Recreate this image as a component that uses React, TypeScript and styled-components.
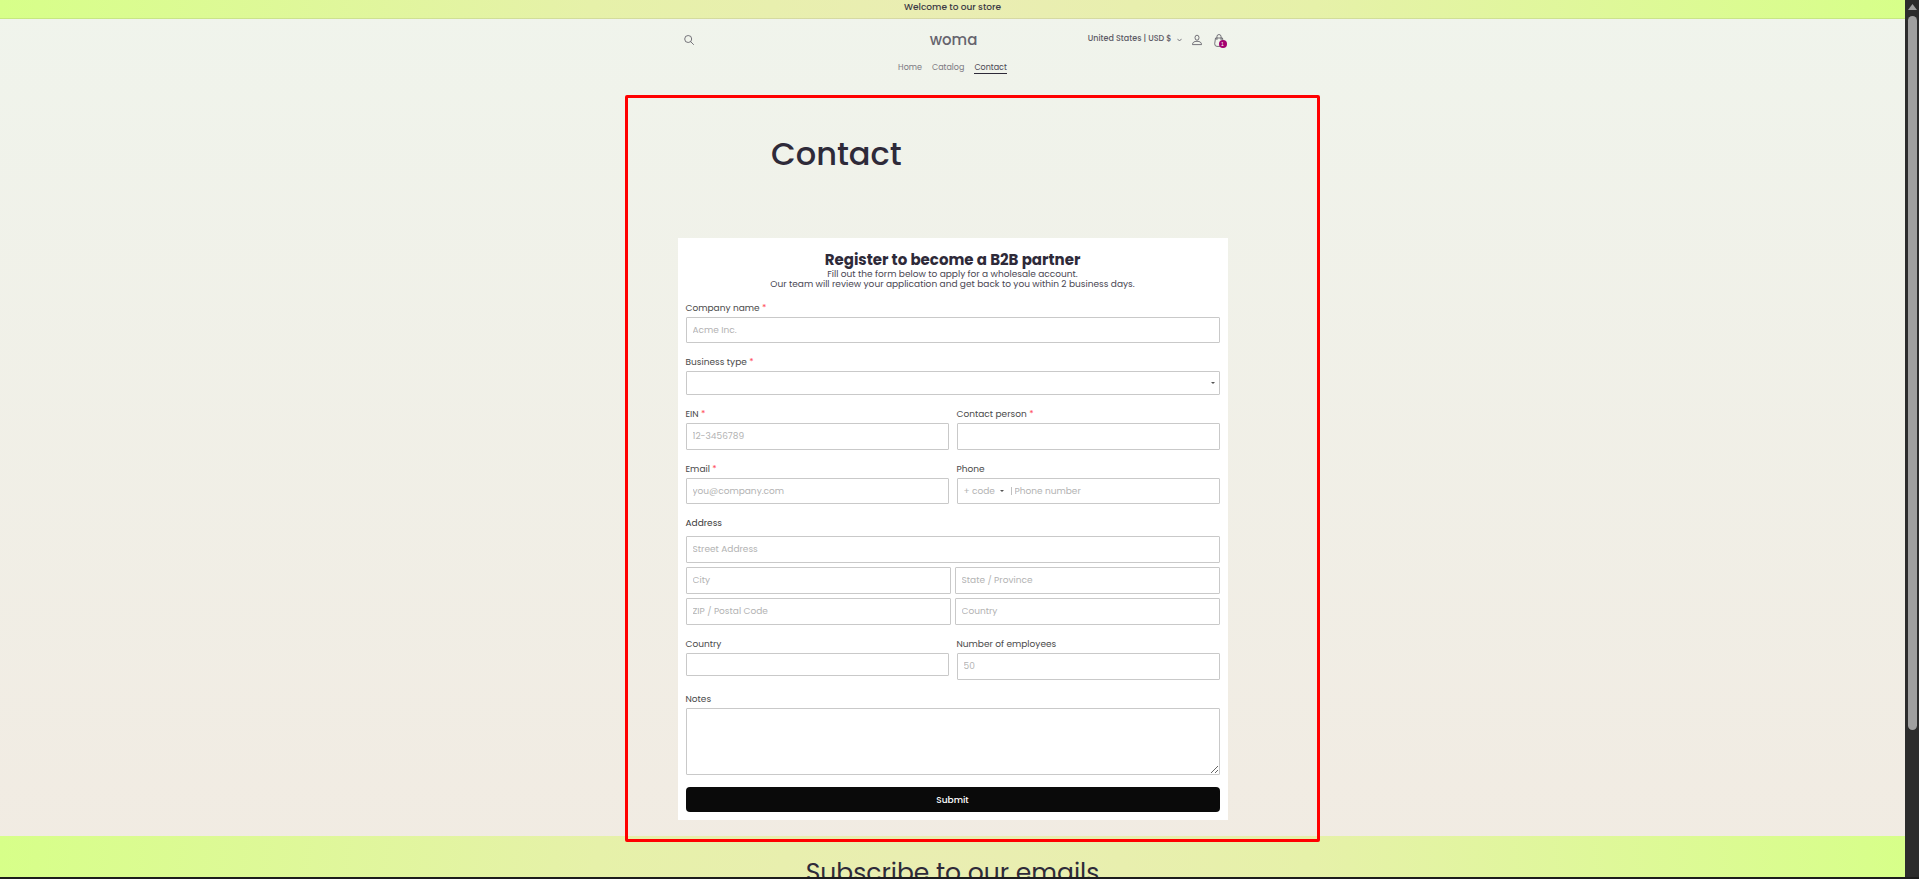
import React from "react";
import styled, { createGlobalStyle, css } from "styled-components";

const GlobalStyle = createGlobalStyle`
  *, *::before, *::after { box-sizing: border-box; }
  html, body { margin: 0; height: 100%; }
  body {
    font-family: Poppins, Inter, "Open Sans", sans-serif;
    font-size: 9px;
    line-height: 12px;
    color: #4a4753;
    overflow: hidden;
  }
  h1, h2, p { margin: 0; }
`;

const Viewport = styled.div`
  display: grid;
  grid-template: minmax(0, 1fr) 2px / minmax(0, 1fr) 14px;
  height: 100vh;
  background: #1c1c1c;
`;

const Page = styled.div`
  position: relative;
  overflow: hidden;
  background: linear-gradient(180deg, #f0f4ec, #f1ebe2);
`;

const ScrollTrack = styled.div`
  display: flex;
  flex-direction: column;
  align-items: center;
  gap: 6px;
  padding-top: 4px;
  background: #2c2c2c;
`;

const ScrollArrow = styled.svg`
  width: 9px;
  height: 6px;
  flex: none;
  fill: #9f9f9f;
`;

const ScrollThumb = styled.div`
  width: 9px;
  height: calc(82% - 2px);
  border-radius: 5px;
  background: #9f9f9f;
`;

const greenGlow = css`
  background: radial-gradient(circle, #eaedb3, #e6f1a9 38%, #d7ff89 100%);
`;

const Announcement = styled.div`
  ${greenGlow}
  height: 19px;
  padding-top: 1px;
  border-bottom: 1px solid rgba(46, 42, 57, 0.1);
  text-align: center;
  font-weight: 500;
  color: #3d3a46;
`;

const Container = styled.div`
  width: 550px;
  max-width: 100%;
  margin: 0 auto;
`;

const Header = styled.header`
  padding: 11px 0 20px;
`;

const HeaderRow = styled.div`
  display: grid;
  grid-template-columns: 1fr auto 1fr;
  align-items: center;
  height: 20px;
  padding: 0 4px 0 6px;
`;

const Logo = styled.a`
  font-size: 15px;
  line-height: 18px;
  font-weight: 500;
  color: #65636d;
  text-decoration: none;
`;

const Tools = styled.div`
  display: flex;
  align-items: center;
  justify-content: flex-end;
  gap: 10px;
`;

const IconGroup = styled.div`
  display: flex;
  align-items: center;
  gap: 12px;
`;

const IconButton = styled.button`
  position: relative;
  display: flex;
  width: 10px;
  padding: 0;
  border: 0;
  background: none;
  color: #55535d;
  svg { display: block; fill: none; stroke: currentColor; overflow: visible; }
`;

const Locale = styled.button`
  display: flex;
  align-items: center;
  gap: 5px;
  padding: 0 0 2px;
  border: 0;
  background: none;
  font: 500 8px/12px Poppins, Inter, sans-serif;
  color: #5c5a65;
  svg { fill: none; stroke: currentColor; margin-top: 2px; }
`;

const Badge = styled.span`
  position: absolute;
  right: -3px;
  bottom: -1px;
  width: 8px;
  height: 8px;
  border-radius: 50%;
  background: #a3006f;
  color: #fff;
  font-size: 5px;
  line-height: 8px;
  text-align: center;
`;

const Nav = styled.nav`
  display: flex;
  justify-content: center;
  gap: 10px;
  margin-top: 13px;
`;

const NavLink = styled.a<{ $active?: boolean }>`
  font-size: 8px;
  line-height: 10px;
  text-decoration: none;
  color: ${(p) => (p.$active ? "#4a4753" : "#7b7982")};
  border-bottom: 1px solid ${(p) => (p.$active ? "#2e2a39" : "transparent")};
`;

const Highlight = styled.div`
  position: absolute;
  top: 95px;
  left: calc(50% - 328px);
  width: 695px;
  height: 747px;
  border: 3px solid #f00;
  border-radius: 2px;
  pointer-events: none;
`;

const TitleBar = styled.div`
  width: 363px;
  max-width: 100%;
  margin: 0 auto;
  padding: 38px 0 62px;
`;

const Title = styled.h1`
  font-size: 32px;
  line-height: 44px;
  font-weight: 500;
  color: #2e2a39;
`;

const Card = styled.form`
  display: flex;
  flex-direction: column;
  gap: 13px;
  padding: 13px 8px 8px;
  margin-bottom: 16px;
  background: #fff;
`;

const Intro = styled.div`
  text-align: center;
  line-height: 10px;
`;

const FormTitle = styled.h2`
  font-size: 15px;
  line-height: 18px;
  font-weight: 700;
  color: #2e2a39;
`;

const Row = styled.div`
  display: grid;
  grid-template-columns: 1fr 1fr;
  align-items: start;
  gap: 8px;
`;

const FieldBox = styled.div`
  display: flex;
  flex-direction: column;
  gap: 3px;
`;

const Label = styled.label`
  color: #4a4a4a;
`;

const Required = styled.span`
  color: #ff4d5a;
`;

const control = css`
  width: 100%;
  border: 1px solid #c9c9c9;
  border-radius: 1px;
  background: #fff;
  font: 400 9px/12px Poppins, Inter, sans-serif;
  color: #333;
  padding: 0 6px;
  outline: none;
  &::placeholder { color: #b3b3b3; opacity: 1; }
`;

const Input = styled.input<{ $h?: number }>`
  ${control}
  height: ${(p) => p.$h ?? 27}px;
`;

const SelectWrap = styled.div`
  position: relative;
  display: flex;
`;

const Select = styled.select`
  ${control}
  height: 24px;
  appearance: none;
`;

const Caret = styled.svg`
  width: 4px;
  height: 2px;
  fill: #555;
`;

const SelectCaret = styled(Caret)`
  position: absolute;
  right: 5px;
  top: 11px;
`;

const PhoneBox = styled.div`
  ${control}
  display: flex;
  align-items: center;
  height: 26px;
  color: #b3b3b3;
`;

const CodeSelect = styled.select`
  appearance: none;
  width: 36px;
  padding: 0;
  border: 0;
  background: none;
  font: inherit;
  color: inherit;
`;

const Divider = styled.span`
  width: 1px;
  height: 8px;
  margin: 0 3px 0 7px;
  background: #c0c0c0;
`;

const PhoneInput = styled.input`
  flex: 1;
  min-width: 0;
  padding: 0;
  border: 0;
  font: inherit;
  outline: none;
  &::placeholder { color: #b3b3b3; opacity: 1; }
`;

const AddressGroup = styled.fieldset`
  margin: 0;
  padding: 0;
  border: 0;
`;

const Legend = styled.legend`
  padding: 0;
  margin-bottom: 7px;
  color: #3a3a3a;
`;

const AddressGrid = styled.div`
  display: grid;
  grid-template-columns: 1fr 1fr;
  gap: 4px;
`;

const StreetInput = styled(Input)`
  grid-column: 1 / -1;
`;

const Notes = styled.textarea`
  ${control}
  display: block;
  height: 67px;
  resize: vertical;
`;

const Submit = styled.button`
  height: 25px;
  margin-top: -1px;
  border: 0;
  border-radius: 4px;
  background: #0a0a0a;
  color: #fff;
  font: 500 9px/12px Poppins, Inter, sans-serif;
`;

const Newsletter = styled.section`
  ${greenGlow}
  height: 190px;
  padding-top: 20px;
  text-align: center;
`;

const NewsletterTitle = styled.h2`
  font-size: 25px;
  line-height: 34px;
  font-weight: 400;
  color: #2e2a39;
`;

type FieldProps = {
  id: string;
  label: string;
  required?: boolean;
  children: React.ReactNode;
};

function Field({ id, label, required, children }: FieldProps) {
  return (
    <FieldBox>
      <Label htmlFor={id}>
        {label} {required && <Required>*</Required>}
      </Label>
      {children}
    </FieldBox>
  );
}

export default function App() {
  return (
    <>
      <GlobalStyle />
      <Viewport>
        <Page>
          <Announcement>Welcome to our store</Announcement>
          <Header>
            <Container>
              <HeaderRow>
                <IconButton aria-label="Search">
                  <svg width="10" height="10" viewBox="0 0 10 10" strokeWidth="0.8">
                    <circle cx="4.2" cy="4" r="3.5" />
                    <path d="M6.6 6.6 9.8 9.8" />
                  </svg>
                </IconButton>
                <Logo href="#">woma</Logo>
                <Tools>
                  <Locale type="button">
                    United States | USD $
                    <svg width="5" height="4" viewBox="0 0 5 4" strokeWidth="0.8">
                      <path d="M0.4 0.8 2.5 3 4.6 0.8" />
                    </svg>
                  </Locale>
                  <IconGroup>
                    <IconButton aria-label="Account">
                      <svg width="10" height="10" viewBox="0 0 10 10" strokeWidth="0.8">
                        <ellipse cx="5" cy="2.7" rx="2" ry="2.5" />
                        <path d="M0.5 9.6C0.5 7.4 2 6.3 5 6.3S9.5 7.4 9.5 9.6Z" />
                      </svg>
                    </IconButton>
                    <IconButton aria-label="Cart">
                      <svg width="10" height="13" viewBox="0 0 10 13" strokeWidth="0.8">
                        <path d="M1.5 4H8.5L9.3 9.8Q9.3 12.4 7 12.4H3Q0.7 12.4 0.7 9.8Z" />
                        <path d="M2.9 6V2.8Q2.9 0.5 5 0.5T7.1 2.8V6" />
                      </svg>
                      <Badge>1</Badge>
                    </IconButton>
                  </IconGroup>
                </Tools>
              </HeaderRow>
              <Nav>
                <NavLink href="#">Home</NavLink>
                <NavLink href="#">Catalog</NavLink>
                <NavLink href="#" $active>Contact</NavLink>
              </Nav>
            </Container>
          </Header>

          <main>
            <TitleBar>
              <Title>Contact</Title>
            </TitleBar>
            <Container>
              <Card>
                <Intro>
                  <FormTitle>Register to become a B2B partner</FormTitle>
                  <p>Fill out the form below to apply for a wholesale account.</p>
                  <p>Our team will review your application and get back to you within 2 business days.</p>
                </Intro>
                <Field id="company" label="Company name" required>
                  <Input id="company" placeholder="Acme Inc." $h={26} />
                </Field>
                <Field id="type" label="Business type" required>
                  <SelectWrap>
                    <Select id="type" />
                    <SelectCaret viewBox="0 0 4 2"><path d="M0 0H4L2 2Z" /></SelectCaret>
                  </SelectWrap>
                </Field>
                <Row>
                  <Field id="ein" label="EIN" required>
                    <Input id="ein" placeholder="12-3456789" />
                  </Field>
                  <Field id="person" label="Contact person" required>
                    <Input id="person" />
                  </Field>
                </Row>
                <Row>
                  <Field id="email" label="Email" required>
                    <Input id="email" type="email" placeholder="you@company.com" $h={26} />
                  </Field>
                  <Field id="phone" label="Phone">
                    <PhoneBox>
                      <CodeSelect aria-label="Country code">
                        <option>+ code</option>
                      </CodeSelect>
                      <Caret viewBox="0 0 4 2"><path d="M0 0H4L2 2Z" /></Caret>
                      <Divider />
                      <PhoneInput id="phone" type="tel" placeholder="Phone number" />
                    </PhoneBox>
                  </Field>
                </Row>
                <AddressGroup>
                  <Legend>Address</Legend>
                  <AddressGrid>
                    <StreetInput aria-label="Street Address" placeholder="Street Address" />
                    <Input aria-label="City" placeholder="City" />
                    <Input aria-label="State / Province" placeholder="State / Province" />
                    <Input aria-label="ZIP / Postal Code" placeholder="ZIP / Postal Code" />
                    <Input aria-label="Country" placeholder="Country" />
                  </AddressGrid>
                </AddressGroup>
                <Row>
                  <Field id="country" label="Country">
                    <Input id="country" $h={23} />
                  </Field>
                  <Field id="employees" label="Number of employees">
                    <Input id="employees" placeholder="50" />
                  </Field>
                </Row>
                <Field id="notes" label="Notes">
                  <Notes id="notes" />
                </Field>
                <Submit type="submit">Submit</Submit>
              </Card>
            </Container>
          </main>

          <Newsletter>
            <NewsletterTitle>Subscribe to our emails</NewsletterTitle>
          </Newsletter>
          <Highlight />
        </Page>
        <ScrollTrack>
          <ScrollArrow viewBox="0 0 9 6"><path d="M4.5 0 9 6H0Z" /></ScrollArrow>
          <ScrollThumb />
        </ScrollTrack>
      </Viewport>
    </>
  );
}
